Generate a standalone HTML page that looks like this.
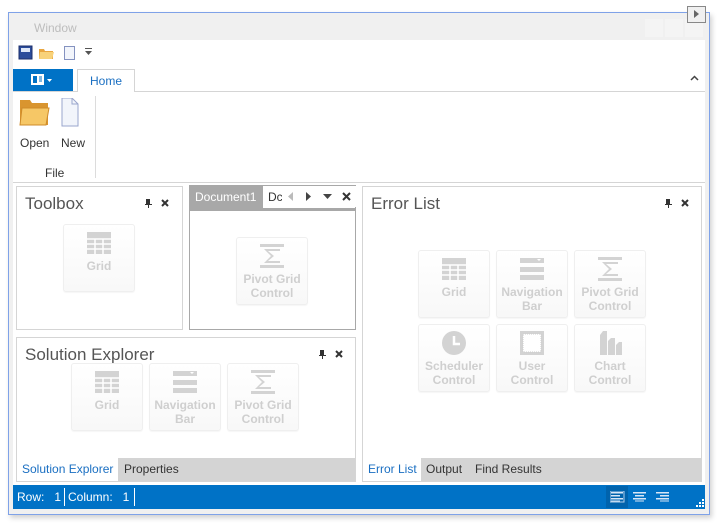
<!DOCTYPE html>
<html><head><style>
*{margin:0;padding:0;box-sizing:border-box}
body{width:724px;height:530px;background:#fff;font-family:"Liberation Sans",sans-serif;position:relative;overflow:hidden;font-size:12px;color:#333}
.a{position:absolute}
.tile{position:absolute;width:72px;height:68px;border:1px solid #efefef;border-radius:3px;background:linear-gradient(#fff,#f8f8f8);box-shadow:0 1px 1px rgba(0,0,0,.04);text-align:center;color:#cfcfcf;font-weight:bold;font-size:12px;line-height:14px}
.tile svg{display:block;margin:6px auto 4px}
.ptitle{position:absolute;font-size:17px;color:#555;font-weight:300}
.pin{position:absolute}
</style></head><body>
<div class="a" style="left:8px;top:12px;width:702px;height:503px;border:1px solid #7fa2e8;background:#f0f0f0;box-shadow:2px 3px 5px rgba(0,0,0,.18)"></div>
<div class="a" style="left:34px;top:21px;color:#bdbdbd;font-size:12px">Window</div>
<div class="a" style="left:645px;top:19px;width:18px;height:18px;background:#f4f4f4"></div>
<div class="a" style="left:665px;top:19px;width:18px;height:18px;background:#f4f4f4"></div>
<div class="a" style="left:685px;top:19px;width:18px;height:18px;background:#f4f4f4"></div>
<div class="a" style="left:687px;top:6px;width:19px;height:17px;border:1px solid #888;background:#f0f0f0"></div>
<div class="a" style="left:694px;top:10px;width:0;height:0;border-left:5px solid #666;border-top:4px solid transparent;border-bottom:4px solid transparent"></div>
<div class="a" style="left:13px;top:40px;width:692px;height:468px;background:#fff"></div>
<svg class="a" style="left:18px;top:45px" width="62" height="16"><rect x="1" y="1" width="13" height="13" fill="#2b4c9b" stroke="#1d2f6b"/><rect x="3" y="3" width="9" height="4" fill="#dfe8f8"/><path d="M21 4h5l1 2h8v8h-14z" fill="#e9a640"/><path d="M22 7h14l-2 7h-13z" fill="#f8d27a"/><rect x="46.5" y="1.5" width="10" height="13" fill="#f2f5fb" stroke="#8492c0"/></svg>
<svg class="a" style="left:85px;top:48px" width="8" height="8"><rect x="0" y="0" width="7" height="1" fill="#555"/><path d="M0 3h7l-3.5 4z" fill="#555"/></svg>
<div class="a" style="left:13px;top:69px;width:60px;height:22px;background:#0072c6"></div>
<svg class="a" style="left:31px;top:74px" width="24" height="12"><rect x="0.5" y="0.5" width="12" height="10" fill="#fff" stroke="#fff"/><rect x="2" y="2" width="4" height="7" fill="#0072c6"/><path d="M8 3h3M8 5h3M8 7h3" stroke="#0072c6"/><path d="M16 5h5l-2.5 3z" fill="#fff"/></svg>
<div class="a" style="left:77px;top:69px;width:58px;height:23px;border:1px solid #d5d5d5;border-bottom:none;background:#fff;color:#1a6fc2;font-size:12px;text-align:center;line-height:23px">Home</div>
<div class="a" style="left:13px;top:91px;width:692px;height:1px;background:#d5d5d5"></div>
<div class="a" style="left:78px;top:91px;width:56px;height:1px;background:#fff"></div>
<svg class="a" style="left:690px;top:75px" width="9" height="6"><path d="M1 5l3.5-3.5 3.5 3.5" stroke="#444" stroke-width="1.5" fill="none"/></svg>
<svg class="a" style="left:19px;top:98px" width="70" height="30"><path d="M1 2h10l2 3h16v22h-28z" fill="#d9952f"/><path d="M3 10h27l-3 17h-26z" fill="#f6c766" stroke="#cf8b2a"/><path d="M43 0h10l6 6v22h-16z" fill="#f2f5fb" stroke="#9aa6cc"/><path d="M53 0v6h6" fill="none" stroke="#9aa6cc"/></svg>
<div class="a" style="left:20px;top:136px;font-size:12px">Open</div>
<div class="a" style="left:61px;top:136px;font-size:12px">New</div>
<div class="a" style="left:45px;top:166px;font-size:12px">File</div>
<div class="a" style="left:95px;top:96px;width:1px;height:82px;background:#dcdcdc"></div>
<div class="a" style="left:13px;top:182px;width:692px;height:1px;background:#d5d5d5"></div>

<div class="a" style="left:16px;top:186px;width:167px;height:144px;border:1px solid #d5d5d5"></div>
<div class="ptitle" style="left:25px;top:194px">Toolbox</div>
<svg class="pin" style="left:144px;top:199px" width="8" height="9"><path d="M2 0h4v5h2v1h-3v3h-1v-3h-3v-1h1z" fill="#333"/></svg>
<svg class="pin" style="left:161px;top:199px" width="8" height="8"><path d="M1 1l6 6M7 1l-6 6" stroke="#333" stroke-width="2"/></svg>
<div class="tile" style="left:63px;top:224px"><svg width="24" height="24"><path d="M0 1h24v22h-24z" fill="#d3d3d3"/><path d="M0 8h24M0 13h24M0 18h24M8 8v15M16 8v15" stroke="#fff" stroke-width="1.5"/></svg>Grid</div>

<div class="a" style="left:189px;top:185px;width:167px;height:145px;border:1px solid #a8a8a8"></div>
<div class="a" style="left:189px;top:185px;width:74px;height:24px;background:#a8a8a8;color:#fff;line-height:24px;padding-left:6px">Document1</div>
<div class="a" style="left:263px;top:185px;width:93px;height:1px;background:#a8a8a8"></div>
<div class="a" style="left:189px;top:208px;width:167px;height:3px;background:#a8a8a8"></div>
<div class="a" style="left:268px;top:190px;color:#333">Dc</div>
<div class="a" style="left:282px;top:186px;width:74px;height:21px;background:#fff"></div>
<svg class="a" style="left:285px;top:191px" width="70" height="12"><path d="M8 1v9l-5-4.5z" fill="#bbb"/><path d="M21 1v9l5-4.5z" fill="#444"/><path d="M38 3h9l-4.5 5z" fill="#444"/><path d="M58 2l7 7M65 2l-7 7" stroke="#333" stroke-width="2"/></svg>
<div class="tile" style="left:236px;top:237px"><svg width="24" height="24"><rect x="0" y="0" width="24" height="3" fill="#d3d3d3"/><rect x="0" y="21" width="24" height="3" fill="#d3d3d3"/><path d="M4 5h16v2h-12l6 5-6 5h12v2h-16l7-7z" fill="#d3d3d3"/></svg>Pivot Grid<br>Control</div>

<div class="a" style="left:16px;top:337px;width:340px;height:145px;border:1px solid #d5d5d5"></div>
<div class="ptitle" style="left:25px;top:345px">Solution Explorer</div>
<svg class="pin" style="left:318px;top:350px" width="8" height="9"><path d="M2 0h4v5h2v1h-3v3h-1v-3h-3v-1h1z" fill="#333"/></svg>
<svg class="pin" style="left:335px;top:350px" width="8" height="8"><path d="M1 1l6 6M7 1l-6 6" stroke="#333" stroke-width="2"/></svg>
<div class="tile" style="left:71px;top:363px"><svg width="24" height="24"><path d="M0 1h24v22h-24z" fill="#d3d3d3"/><path d="M0 8h24M0 13h24M0 18h24M8 8v15M16 8v15" stroke="#fff" stroke-width="1.5"/></svg>Grid</div>
<div class="tile" style="left:149px;top:363px"><svg width="24" height="24"><rect x="0" y="1" width="24" height="5" fill="#d3d3d3"/><path d="M17 2h4l-2 2z" fill="#fff"/><rect x="0" y="10" width="24" height="5" fill="#d3d3d3"/><rect x="0" y="18" width="24" height="5" fill="#d3d3d3"/></svg>Navigation<br>Bar</div>
<div class="tile" style="left:227px;top:363px"><svg width="24" height="24"><rect x="0" y="0" width="24" height="3" fill="#d3d3d3"/><rect x="0" y="21" width="24" height="3" fill="#d3d3d3"/><path d="M4 5h16v2h-12l6 5-6 5h12v2h-16l7-7z" fill="#d3d3d3"/></svg>Pivot Grid<br>Control</div>
<div class="a" style="left:17px;top:458px;width:338px;height:23px;background:#d4d4d4"></div>
<div class="a" style="left:17px;top:458px;width:101px;height:23px;background:#fff;color:#1a6fc2;line-height:23px;padding-left:5px">Solution Explorer</div>
<div class="a" style="left:124px;top:458px;line-height:23px;color:#333">Properties</div>

<div class="a" style="left:362px;top:186px;width:340px;height:296px;border:1px solid #d5d5d5"></div>
<div class="ptitle" style="left:371px;top:194px">Error List</div>
<svg class="pin" style="left:664px;top:199px" width="8" height="9"><path d="M2 0h4v5h2v1h-3v3h-1v-3h-3v-1h1z" fill="#333"/></svg>
<svg class="pin" style="left:681px;top:199px" width="8" height="8"><path d="M1 1l6 6M7 1l-6 6" stroke="#333" stroke-width="2"/></svg>
<div class="tile" style="left:418px;top:250px"><svg width="24" height="24"><path d="M0 1h24v22h-24z" fill="#d3d3d3"/><path d="M0 8h24M0 13h24M0 18h24M8 8v15M16 8v15" stroke="#fff" stroke-width="1.5"/></svg>Grid</div>
<div class="tile" style="left:496px;top:250px"><svg width="24" height="24"><rect x="0" y="1" width="24" height="5" fill="#d3d3d3"/><path d="M17 2h4l-2 2z" fill="#fff"/><rect x="0" y="10" width="24" height="5" fill="#d3d3d3"/><rect x="0" y="18" width="24" height="5" fill="#d3d3d3"/></svg>Navigation<br>Bar</div>
<div class="tile" style="left:574px;top:250px"><svg width="24" height="24"><rect x="0" y="0" width="24" height="3" fill="#d3d3d3"/><rect x="0" y="21" width="24" height="3" fill="#d3d3d3"/><path d="M4 5h16v2h-12l6 5-6 5h12v2h-16l7-7z" fill="#d3d3d3"/></svg>Pivot Grid<br>Control</div>
<div class="tile" style="left:418px;top:324px"><svg width="24" height="24"><circle cx="12" cy="12" r="12" fill="#d3d3d3"/><path d="M12 5v8h6" stroke="#fff" stroke-width="2.5" fill="none"/></svg>Scheduler<br>Control</div>
<div class="tile" style="left:496px;top:324px"><svg width="24" height="24"><rect x="0" y="0" width="24" height="24" fill="#d3d3d3"/><rect x="3" y="3" width="18" height="18" fill="#fff" stroke="#ccc" stroke-dasharray="1 1"/></svg>User<br>Control</div>
<div class="tile" style="left:574px;top:324px"><svg width="24" height="24"><path d="M2 24v-20l3-4h4v24z" fill="#d3d3d3"/><path d="M10 24v-14l3-3h4v17z" fill="#d3d3d3"/><path d="M18 24v-10l3-3h3v13z" fill="#d3d3d3"/></svg>Chart<br>Control</div>
<div class="a" style="left:363px;top:458px;width:338px;height:23px;background:#d4d4d4"></div>
<div class="a" style="left:363px;top:458px;width:58px;height:23px;background:#fff;color:#1a6fc2;line-height:23px;padding-left:5px">Error List</div>
<div class="a" style="left:426px;top:458px;line-height:23px;color:#333">Output</div>
<div class="a" style="left:475px;top:458px;line-height:23px;color:#333">Find Results</div>

<div class="a" style="left:13px;top:485px;width:692px;height:24px;background:#0072c6"></div>
<div class="a" style="left:17px;top:485px;color:#fff;line-height:24px;font-size:12px">Row:&nbsp;&nbsp; 1</div>
<div class="a" style="left:64px;top:488px;width:1px;height:18px;background:#fff"></div>
<div class="a" style="left:68px;top:485px;color:#fff;line-height:24px;font-size:12px">Column:&nbsp;&nbsp; 1</div>
<div class="a" style="left:134px;top:488px;width:1px;height:18px;background:#fff"></div>
<div class="a" style="left:606px;top:486px;width:22px;height:22px;background:#0063ad"></div>
<svg class="a" style="left:610px;top:491px" width="60" height="12"><g fill="#fff" opacity=".85"><rect x="0" y="0" width="14" height="11" fill="none" stroke="#cfe0f4"/></g><g fill="#d8e6f6"><rect x="1" y="1" width="12" height="1.5"/><rect x="1" y="4" width="9" height="1.5"/><rect x="1" y="7" width="12" height="1.5"/><rect x="1" y="9.5" width="9" height="1"/><rect x="23" y="1" width="13" height="1.5"/><rect x="25" y="4" width="9" height="1.5"/><rect x="23" y="7" width="13" height="1.5"/><rect x="25" y="9.5" width="9" height="1"/><rect x="46" y="1" width="13" height="1.5"/><rect x="50" y="4" width="9" height="1.5"/><rect x="46" y="7" width="13" height="1.5"/><rect x="50" y="9.5" width="9" height="1"/></g></svg>
<svg class="a" style="left:696px;top:499px" width="8" height="8" fill="#fff"><rect x="6" y="0" width="2" height="2"/><rect x="3" y="3" width="2" height="2"/><rect x="6" y="3" width="2" height="2"/><rect x="0" y="6" width="2" height="2"/><rect x="3" y="6" width="2" height="2"/><rect x="6" y="6" width="2" height="2"/></svg>
</body></html>
